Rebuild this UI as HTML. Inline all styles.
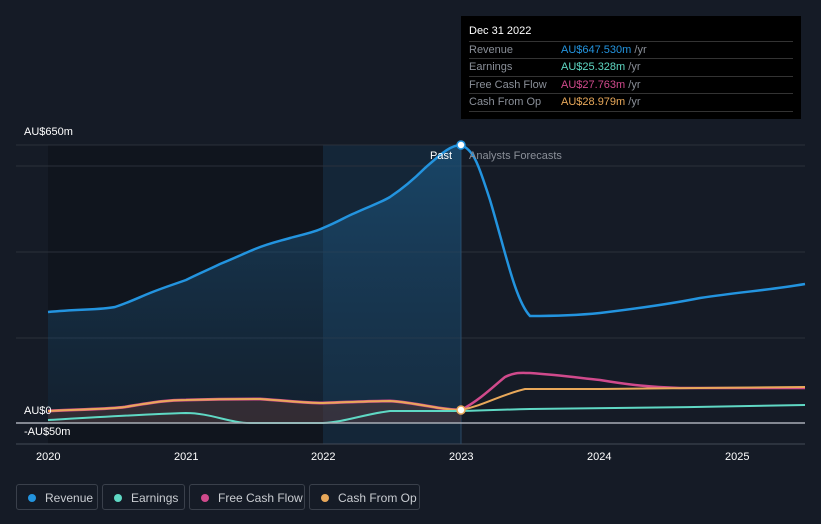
<!DOCTYPE html><html><head><style>
body{margin:0;width:821px;height:524px;background:#151b26;font-family:"Liberation Sans",sans-serif;overflow:hidden;position:relative}
.t{position:absolute;color:#fff;font-size:11px}
.tip{position:absolute;left:461px;top:16px;width:340px;height:103px;background:#000}
.row{position:absolute;left:8px;width:324px;border-top:1px solid #333;height:17px;font-size:11px;line-height:17px;color:#8a8f98}
.row span{position:absolute;left:92px}
.lg{position:absolute;top:484px;height:26px;border:1px solid #3a404b;border-radius:3px;color:#c9ccd1;font-size:12px;line-height:26px;box-sizing:border-box}
.lg i{position:absolute;left:11px;top:9px;width:8px;height:8px;border-radius:50%}
</style></head><body>
<svg width="821" height="524" style="position:absolute;left:0;top:0">
<defs>
<linearGradient id="g" x1="0" y1="0" x2="0" y2="1"><stop offset="0" stop-color="#1c5a86" stop-opacity=".6"/><stop offset="1" stop-color="#1c4260" stop-opacity=".25"/></linearGradient>
</defs>
<rect x="48" y="145" width="275" height="299" fill="#10151e"/>
<rect x="323" y="145" width="138" height="299" fill="#142638"/>
<g stroke="#2a303b" stroke-width="1"><line x1="16" y1="145" x2="805" y2="145"/><line x1="16" y1="166" x2="805" y2="166"/><line x1="16" y1="252" x2="805" y2="252"/><line x1="16" y1="338" x2="805" y2="338"/><line x1="16" y1="444" x2="805" y2="444" stroke="#444b57"/></g>
<line x1="461" y1="145" x2="461" y2="444" stroke="#2c4a66"/>
<path d="M48,312 C80,309 100,310 115,307 C130,302 140,297 150,293 C165,287 175,284 186,280 C200,273 210,269 220,264 C235,258 245,253 255,249 C270,243 280,241 290,238 C305,234 315,232 323,228 C340,221 345,217 355,213 C370,206 380,203 390,197 C405,187 415,178 425,168 C440,155 450,145 461,145 L461,423 L48,423Z" fill="url(#g)"/>
<path d="M48,312 C80,309 100,310 115,307 C130,302 140,297 150,293 C165,287 175,284 186,280 C200,273 210,269 220,264 C235,258 245,253 255,249 C270,243 280,241 290,238 C305,234 315,232 323,228 C340,221 345,217 355,213 C370,206 380,203 390,197 C405,187 415,178 425,168 C440,155 450,145 461,145 C475,150 480,170 490,200 C505,250 515,300 530,316 C560,316 580,315 600,313 C650,307 680,302 700,298 C740,292 770,290 805,284" fill="none" stroke="#2394df" stroke-width="2.5"/>
<path d="M48,411 C90,409 110,409 125,407 C150,403 165,400 186,400 C220,399 240,399 260,399 C290,401 305,403 323,403 C350,402 370,401 390,401 C420,403 440,410 461,410 L461,423 L48,423Z" fill="#5a3a3a" opacity=".45"/>
<path d="M461,410 C480,400 495,385 505,377 C515,372 520,373 530,373 C560,375 580,378 600,380 C630,385 650,387 680,388 L805,388" fill="none" stroke="#d04a8c" stroke-width="2.5"/>
<path d="M48,411 C90,409 110,409 125,407 C150,403 165,400 186,400 C220,399 240,399 260,399 C290,401 305,403 323,403 C350,402 370,401 390,401 C420,403 440,410 461,410" fill="none" stroke="#d04a8c" stroke-width="3"/>
<path d="M48,411 C90,409 110,409 125,407 C150,403 165,400 186,400 C220,399 240,399 260,399 C290,401 305,403 323,403 C350,402 370,401 390,401 C420,403 440,410 461,410 C485,405 500,395 525,389 L600,389 L805,387" fill="none" stroke="#e8a85a" stroke-width="2"/>
<path d="M48,420 C100,417 150,414 186,413 C210,413 230,423 250,423 L323,423 C345,422 365,414 390,411 L461,411 C500,410 520,409 530,409 C650,408 700,407 805,405" fill="none" stroke="#5fd8c4" stroke-width="2"/>
<line x1="16" y1="423" x2="805" y2="423" stroke="#a8adb5" stroke-width="1.5"/>
<circle cx="461" cy="145" r="4" fill="#fff" stroke="#2394df" stroke-width="1.5"/>
<circle cx="461" cy="410" r="4" fill="#fff" stroke="#e8a85a" stroke-width="1.5"/>
</svg>
<div class="t" style="left:24px;top:126px">AU$650m</div>
<div class="t" style="left:24px;top:405px">AU$0</div>
<div class="t" style="left:24px;top:426px">-AU$50m</div>
<div class="t" style="left:430px;top:150px">Past</div>
<div class="t" style="left:469px;top:150px;color:#8a8f98">Analysts Forecasts</div>
<div class="t" style="left:36px;top:451px">2020</div>
<div class="t" style="left:174px;top:451px">2021</div>
<div class="t" style="left:311px;top:451px">2022</div>
<div class="t" style="left:449px;top:451px">2023</div>
<div class="t" style="left:587px;top:451px">2024</div>
<div class="t" style="left:725px;top:451px">2025</div>
<div class="tip">
<div class="t" style="left:8px;top:9px">Dec 31 2022</div>
<div class="row" style="top:25px">Revenue<span style="color:#2394df">AU$647.530m <b style="color:#8a8f98;font-weight:normal">/yr</b></span></div>
<div class="row" style="top:42px">Earnings<span style="color:#5fd8c4">AU$25.328m <b style="color:#8a8f98;font-weight:normal">/yr</b></span></div>
<div class="row" style="top:60px">Free Cash Flow<span style="color:#d04a8c">AU$27.763m <b style="color:#8a8f98;font-weight:normal">/yr</b></span></div>
<div class="row" style="top:77px;border-bottom:1px solid #333">Cash From Op<span style="color:#e8a85a">AU$28.979m <b style="color:#8a8f98;font-weight:normal">/yr</b></span></div>
</div>
<div class="lg" style="left:16px;width:82px"><i style="background:#2394df"></i><span style="position:absolute;left:28px">Revenue</span></div>
<div class="lg" style="left:102px;width:83px"><i style="background:#5fd8c4"></i><span style="position:absolute;left:28px">Earnings</span></div>
<div class="lg" style="left:189px;width:116px"><i style="background:#d04a8c"></i><span style="position:absolute;left:28px">Free Cash Flow</span></div>
<div class="lg" style="left:309px;width:111px"><i style="background:#e8a85a"></i><span style="position:absolute;left:28px">Cash From Op</span></div>
</body></html>
